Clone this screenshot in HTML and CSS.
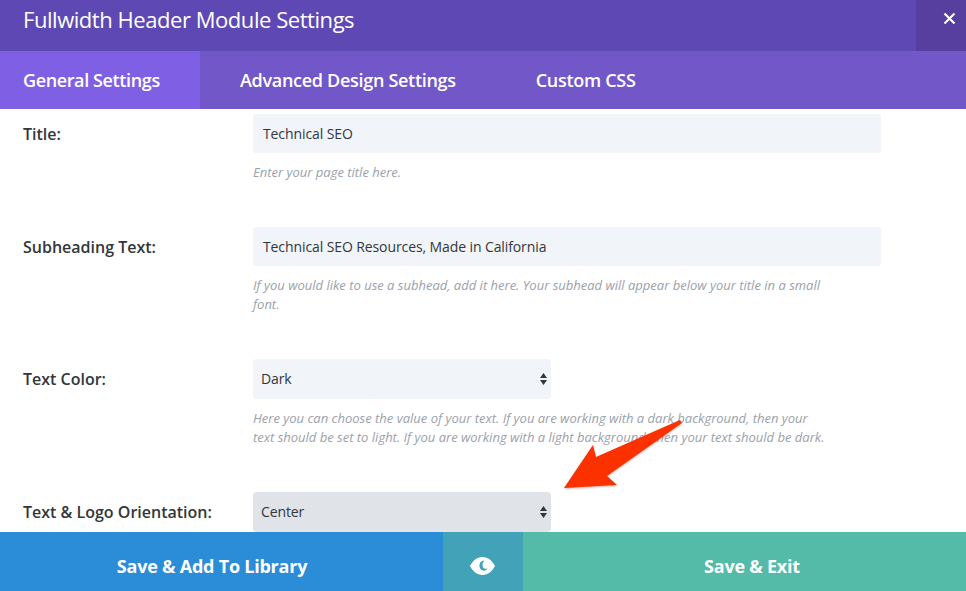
FILE: index.html
```html
<!DOCTYPE html>
<html lang="en">

<head>
  <meta charset="UTF-8">
  <meta name="viewport" content="width=device-width, initial-scale=1.0">
  <title>Fullwidth Header Module Settings</title>
  <link rel="stylesheet" href="styles.css">
</head>

<body>

  <div class="modal">
    <header class="modal-header">
      <h1>Fullwidth Header Module Settings</h1>
      <button class="close-btn" aria-label="Close">
        <svg width="13" height="13" viewBox="0 0 13 13">
          <path d="M1.5 1.5L11.5 11.5M11.5 1.5L1.5 11.5" stroke="#fff" stroke-width="2.2" fill="none" />
        </svg>
      </button>
    </header>

    <nav class="tabs">
      <a class="tab tab-active">General Settings</a>
      <a class="tab">Advanced Design Settings</a>
      <a class="tab">Custom CSS</a>
    </nav>

    <main class="settings">
      <div class="row row-title">
        <label>Title:</label>
        <div class="field">
          <div class="input">Technical SEO</div>
          <p class="help">Enter your page title here.</p>
        </div>
      </div>

      <div class="row row-subhead">
        <label>Subheading Text:</label>
        <div class="field">
          <div class="input">Technical SEO Resources, Made in California</div>
          <p class="help">If you would like to use a subhead, add it here. Your subhead will appear below your title in a small font.</p>
        </div>
      </div>

      <div class="row row-color">
        <label>Text Color:</label>
        <div class="field">
          <div class="select">Dark
            <svg class="updown" width="7" height="12" viewBox="0 0 8 13" preserveAspectRatio="none">
              <path d="M4 0L8 5.500H0ZM0 7.500H8L4 13Z" fill="#32373c" />
            </svg>
          </div>
          <p class="help">Here you can choose the value of your text. If you are working with a dark background, then your text should be set to light. If you are working with a light background, then your text should be dark.</p>
        </div>
      </div>

      <div class="row">
        <label>Text &amp; Logo Orientation:</label>
        <div class="field">
          <div class="select select-focus">Center
            <svg class="updown" width="7" height="12" viewBox="0 0 8 13" preserveAspectRatio="none">
              <path d="M4 0L8 5.500H0ZM0 7.500H8L4 13Z" fill="#32373c" />
            </svg>
          </div>
        </div>
      </div>
    </main>

    <footer class="actions">
      <a class="action action-library">Save &amp; Add To Library</a>
      <a class="action-preview" aria-label="Preview">
        <svg width="25" height="18" viewBox="0 0 25 16" preserveAspectRatio="none">
          <path fill="#fff" fill-rule="evenodd" d="M12.500 0C18 0 22.500 3.400 25 8C22.500 12.600 18 16 12.500 16C7 16 2.500 12.600 0 8C2.500 3.400 7 0 12.500 0ZM13.500 3.300C10.800 3.300 9.500 5.600 9.500 7.800C9.500 10.400 11.500 12.200 14 12.200C15.700 12.200 17 11.300 17.600 10.100C16.900 10.500 16.100 10.600 15.400 10.500C13.500 10.200 12.500 8.700 12.500 7C12.500 5.500 13.200 4.200 14.600 3.400C14.300 3.300 13.900 3.300 13.500 3.300Z" />
        </svg>
      </a>
      <a class="action action-exit">Save &amp; Exit</a>
    </footer>

    <!-- red arrow annotation lying over the form -->
    <svg class="arrow" width="130" height="80" viewBox="560 415 130 80">
      <polygon points="564,488 593,445 596,457 680,420 682,423 607,476 617,485" fill="#fb3200" />
    </svg>
  </div>

</body>

</html>
```

FILE: styles.css
```css
* {
  box-sizing: border-box;
}

body {
  margin: 0;
  font-family: 'Open Sans', sans-serif;
  background-color: white;
}

.modal {
  position: relative;
  width: 966px;
  height: 591px;
  display: flex;
  flex-direction: column;
  overflow: hidden;
}

.modal-header {
  height: 51px;
  flex: none;
  display: flex;
  justify-content: space-between;
  background-color: #5e49b4;
}

.modal-header h1 {
  margin: 0;
  padding: 2px 0 0 23px;
  font-size: 22px;
  font-weight: 400;
  line-height: 34px;
  letter-spacing: -0.45px;
  color: white;
}

.close-btn {
  width: 50px;
  height: 51px;
  padding: 12px 0 0 27px;
  margin: 0;
  border: none;
  background-color: #573f9f;
  display: flex;
}

.tabs {
  height: 58px;
  flex: none;
  display: flex;
  background-color: #7257c9;
}

.tab {
  padding: 0 40px 1px;
  display: flex;
  align-items: center;
  font-size: 18px;
  font-weight: 600;
  letter-spacing: -0.3px;
  color: white;
}

.tab-active {
  width: 200px;
  padding-left: 23px;
  padding-right: 0;
  letter-spacing: -0.38px;
  background-color: #7f60e5;
}

.settings {
  flex: 1;
  min-height: 0;
  overflow: hidden;
  padding: 5px 0 0 23px;
}

.row {
  display: flex;
}

.row-title {
  height: 113px;
}

.row-subhead {
  height: 132px;
}

.row-color {
  height: 133px;
}

.row label {
  width: 230px;
  flex: none;
  padding-top: 10px;
  font-size: 16px;
  font-weight: 600;
  line-height: 20px;
  color: #32373c;
}

.field {
  width: 628px;
}

.input {
  height: 39px;
  padding: 0 10px;
  display: flex;
  align-items: center;
  font-size: 14px;
  letter-spacing: -0.1px;
  color: #32373c;
  background-color: #f1f4f9;
  border-radius: 3px;
}

.select {
  width: 298px;
  height: 40px;
  padding: 0 8px 2px;
  display: flex;
  align-items: center;
  justify-content: space-between;
  font-size: 14px;
  letter-spacing: -0.1px;
  color: #32373c;
  background-color: #f1f4f9;
  border-radius: 4px;
}

.select-focus {
  background-color: #e0e3e8;
}

.updown {
  margin: 2px -4px 0 0;
}

.help {
  width: 578px;
  margin: 10px 0 0;
  font-size: 13px;
  font-style: italic;
  line-height: 19px;
  color: #9aa1ab;
}

.actions {
  height: 59px;
  flex: none;
  display: flex;
  font-size: 18px;
  font-weight: 700;
  letter-spacing: -0.23px;
  color: white;
}

.action {
  width: 443px;
  padding-top: 8px;
  display: flex;
  align-items: center;
  justify-content: center;
}

.action-library {
  padding-right: 19px;
  background-color: #2b8cd8;
}

.action-exit {
  padding-left: 15px;
  background-color: #53bba7;
}

.action-preview {
  width: 80px;
  padding: 8px 1px 0 0;
  display: flex;
  align-items: center;
  justify-content: center;
  background-color: #42a2b7;
}

.arrow {
  position: absolute;
  left: 560px;
  top: 415px;
  filter: drop-shadow(0 1px 1px rgba(120, 40, 20, 0.35));
}
```
